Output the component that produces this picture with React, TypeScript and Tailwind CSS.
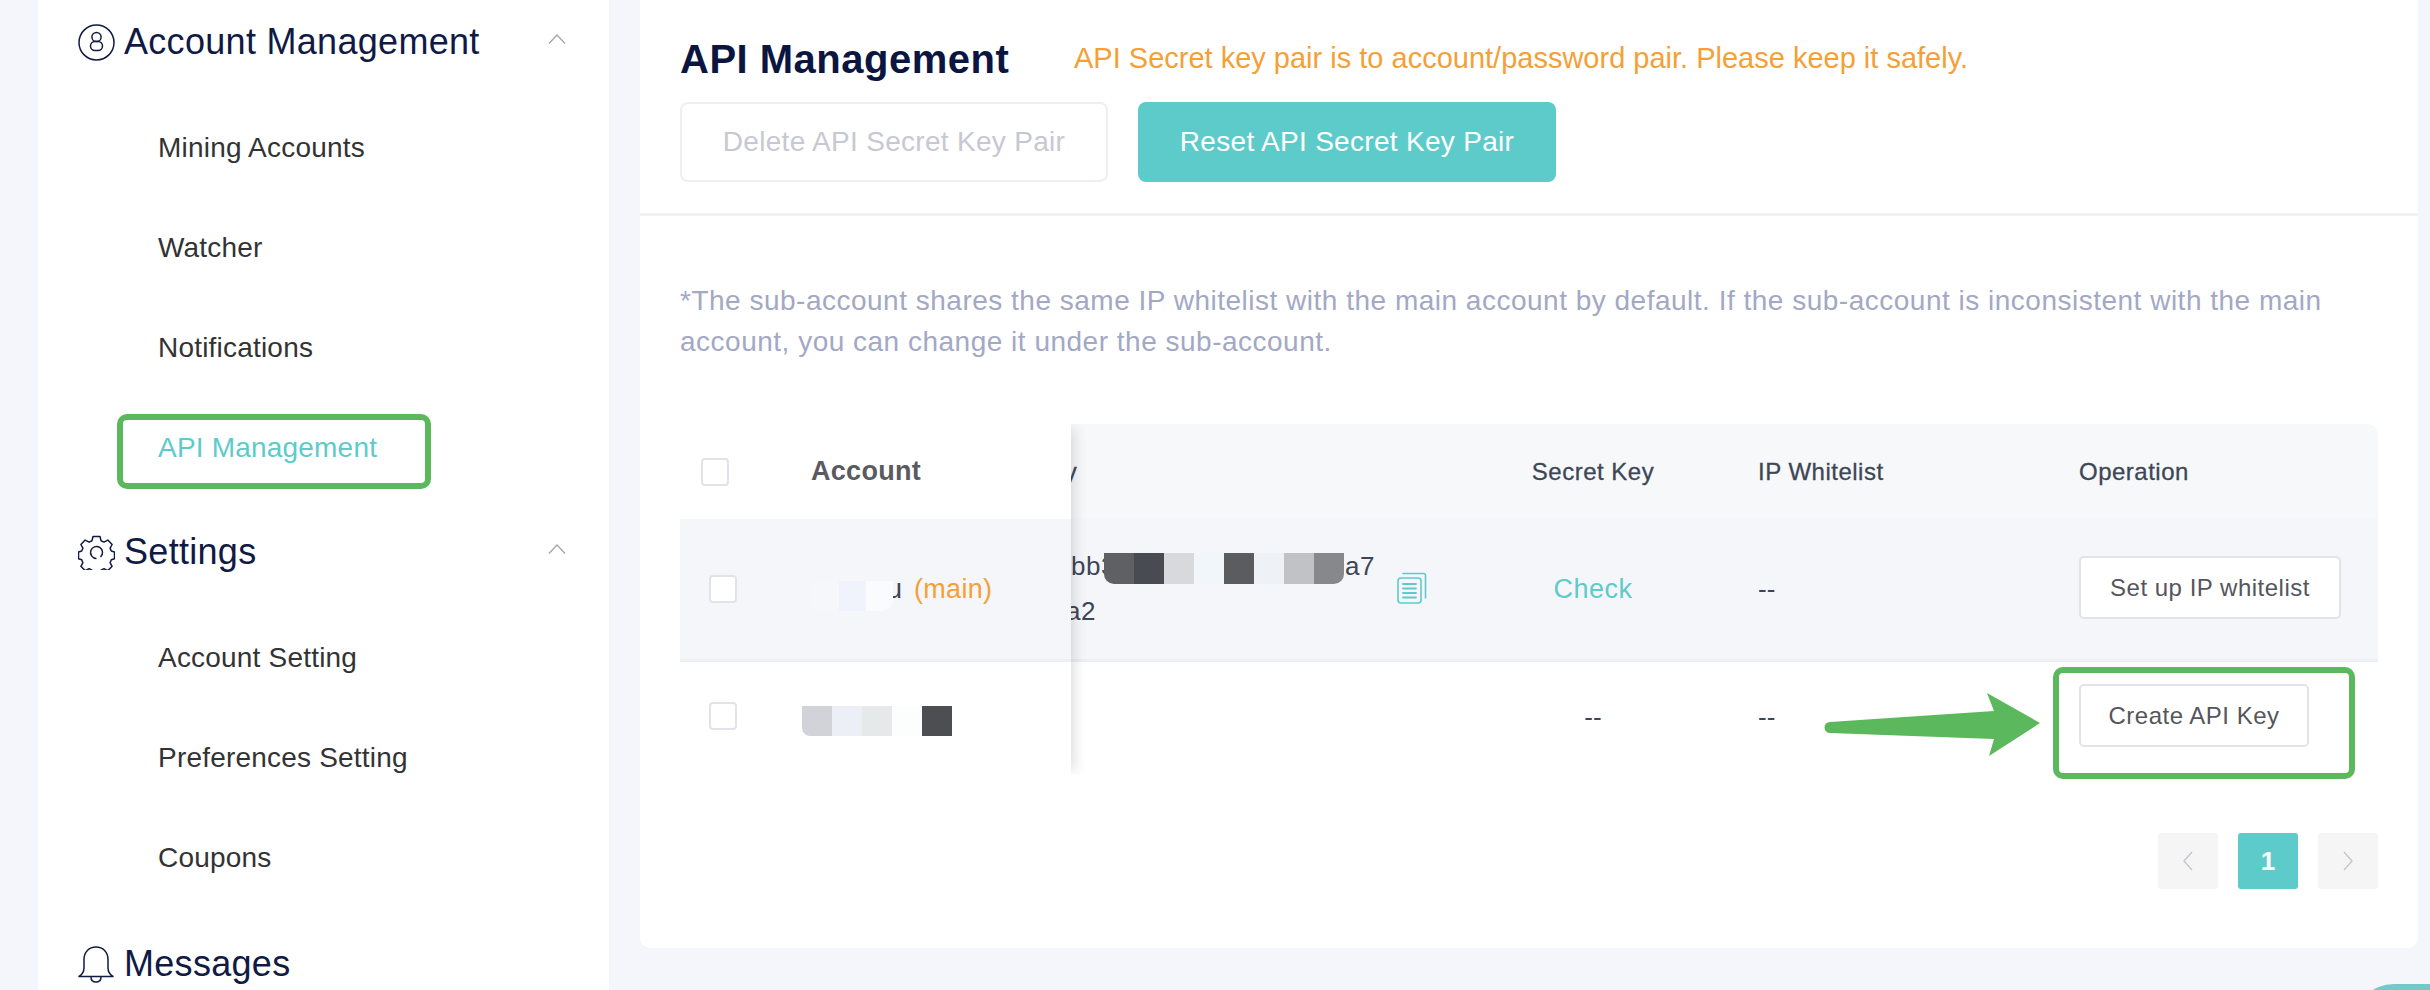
const font = { fontFamily: '"Liberation Sans", Arial, sans-serif' };

function AccountIcon() {
  return (
    <svg width="37" height="37" viewBox="0 0 37 37" fill="none" stroke="#101a45" strokeWidth="1.5">
      <circle cx="18.5" cy="18.5" r="17.5" />
      <circle cx="18.5" cy="13" r="4.6" />
      <rect x="12.5" y="17.5" width="12" height="9" rx="4.5" />
    </svg>
  );
}

function GearIcon() {
  return (
    <svg width="37" height="35" viewBox="0 0 37 35" fill="none" stroke="#101a45" strokeWidth="1.5" strokeLinejoin="round">
      <path d="M15 1.5h7l1 4.2 3 1.4 3.8-2 4.3 4.4-2 3.6 1.2 2.9 3.2 1v6.8l-3.2 1-1.2 2.9 2 3.6-4.3 4.4-3.8-2-3 1.4-1 1.3h-7l-1-1.3-3-1.4-3.8 2-4.3-4.4 2-3.6-1.2-2.9-3.2-1v-6.8l3.2-1 1.2-2.9-2-3.6 4.3-4.4 3.8 2 3-1.4z" />
      <path d="M22.5 22a6 6 0 1 0-4 1.5" />
    </svg>
  );
}

function BellIcon() {
  return (
    <svg width="36" height="37" viewBox="0 0 36 37" fill="none" stroke="#101a45" strokeWidth="1.5" strokeLinejoin="round">
      <path d="M1 30.5h34c-3.500-2-5-5-5-9V13.500C30 6 25 1 18 1S6 6 6 13.500v8c0 4-1.500 7-5 9z" />
      <path d="M13 31c0 3.200 2.200 5 5 5s5-1.800 5-5" />
    </svg>
  );
}

function Chevron() {
  return (
    <svg width="18" height="10" viewBox="0 0 18 10" fill="none" stroke="#a3a5ad" strokeWidth="1.3">
      <path d="M1 9.500 9 1l8 8.500" />
    </svg>
  );
}

function CopyIcon() {
  return (
    <svg width="30" height="32" viewBox="0 0 30 32" fill="none" stroke="#5ecbcb" strokeWidth="1.6" strokeLinecap="round">
      <path d="M6 1.500h20.500a2 2 0 0 1 2 2V26" />
      <rect x="1" y="6" width="23" height="25" rx="3" />
      <path d="M6 12h13M6 16.500h13M6 21h13M6 25.500h13" strokeWidth="1.8" />
    </svg>
  );
}

// mosaic blocks that hide account names and keys in the reference
function Pixels({ colors, cell, className }: { colors: string[]; cell: string; className?: string }) {
  return (
    <div className={`flex overflow-hidden ${className ?? ''}`}>
      {colors.map((c, i) => (
        <div key={i} className={cell} style={{ backgroundColor: c }} />
      ))}
    </div>
  );
}

function NavGroup({ icon, title, items, active }: { icon: React.ReactNode; title: string; items: string[]; active?: string }) {
  return (
    <div>
      <div className="flex items-center h-[40px] pr-[43px]">
        <div className="w-[46px] flex shrink-0">{icon}</div>
        <span className="text-[36px] tracking-[0.3px] text-[#101a45] flex-1">{title}</span>
        {items.length > 0 && <div className="-mt-[6px]"><Chevron /></div>}
      </div>
      <div className="mt-[50px]">
        {items.map((it) => (
          <div key={it} className="relative h-[100px] pl-[80px] pt-[16px]">
            {it === active && <div className="absolute left-[39px] top-[2px] w-[314px] h-[75px] border-[6px] border-[#5cb85c] rounded-[10px]" />}
            <span className={`text-[28px] tracking-[0.2px] leading-[40px] ${it === active ? 'text-[#5ecbcb]' : 'text-[#333333]'}`}>{it}</span>
          </div>
        ))}
      </div>
    </div>
  );
}

export default function App() {
  return (
    <div className="relative flex h-[990px] w-[2430px] overflow-hidden bg-[#f4f6fb]" style={font}>
      {/* sidebar */}
      <div className="ml-[38px] w-[571px] h-full bg-white pl-[40px] pt-[22px] shrink-0">
        <NavGroup
          icon={<AccountIcon />}
          title="Account Management"
          items={['Mining Accounts', 'Watcher', 'Notifications', 'API Management']}
          active="API Management"
        />
        <div className="mt-[20px]">
          <NavGroup icon={<GearIcon />} title="Settings" items={['Account Setting', 'Preferences Setting', 'Coupons']} />
        </div>
        <div className="mt-[22px]">
          <NavGroup icon={<BellIcon />} title="Messages" items={[]} />
        </div>
      </div>

      {/* main card */}
      <div className="ml-[31px] w-[1778px] h-[948px] bg-white rounded-b-[10px] shrink-0">
        <div className="h-[216px] border-b-[3px] border-[#f1f1f6] px-[40px] pt-[32px]">
          <div className="flex items-center h-[54px]">
            <h1 className="text-[40px] font-bold tracking-[0.5px] text-[#0b1640] w-[394px]">API Management</h1>
            <span className="text-[29px] text-[#f5a037]">API Secret key pair is to account/password pair. Please keep it safely.</span>
          </div>
          <div className="flex gap-[30px] mt-[16px]">
            <button className="w-[428px] h-[80px] rounded-[8px] border-[2px] border-[#eeeef3] text-[28px] tracking-[0.3px] text-[#c6c8d2]">Delete API Secret Key Pair</button>
            <button className="w-[418px] h-[80px] rounded-[8px] bg-[#5ecbcb] text-[28px] tracking-[0.3px] text-white">Reset API Secret Key Pair</button>
          </div>
        </div>

        <div className="px-[40px] pt-[64px]">
          <p className="text-[28px] leading-[41px] tracking-[0.5px] text-[#a3a8c4]">
            *The sub-account shares the same IP whitelist with the main account by default. If the sub-account is inconsistent with the main<br />
            account, you can change it under the sub-account.
          </p>

          {/* table */}
          <div className="relative mt-[62px] h-[351px] overflow-hidden">
            <div className="flex">
              {/* fixed column */}
              <div className="relative z-10 w-[391px] shrink-0 bg-white shadow-[8px_0_12px_-4px_rgba(0,0,0,0.12)]">
                <div className="h-[95px] flex items-center pl-[21px]">
                  <div className="w-[28px] h-[28px] rounded-[4px] border-[2px] border-[#e2e3ea] bg-white" />
                  <span className="ml-[82px] text-[27px] font-bold tracking-[0.3px] text-[#5a5b60]">Account</span>
                </div>
                <div className="h-[143px] bg-[#f5f6fa] border-b-[3px] border-[#eeeff4] flex items-center pl-[29px]">
                  <div className="w-[28px] h-[28px] rounded-[4px] border-[2px] border-[#e2e3ea] bg-white" />
                  <div className="relative ml-[75px] w-[90px] flex justify-end text-[28px] text-[#3d4656]">
                    <span>u</span>
                    <div className="absolute left-0 top-[13px]">
                      <Pixels colors={['#f6f7fb', '#f0f3fb', '#fafbfd']} cell="w-[27px] h-[30px]" className="rounded-br-[12px]" />
                    </div>
                  </div>
                  <span className="ml-[12px] text-[27px] tracking-[0.3px] text-[#f5a037]">(main)</span>
                </div>
                <div className="h-[113px] flex pl-[29px] pt-[40px]">
                  <div className="w-[28px] h-[28px] rounded-[4px] border-[2px] border-[#e2e3ea] bg-white" />
                  <div className="ml-[65px] mt-[4px]">
                    <Pixels colors={['#d2d3d8', '#ecf0f6', '#e6e9ea', '#fcfdfd', '#4d4e52']} cell="w-[30px] h-[30px]" className="rounded-bl-[8px]" />
                  </div>
                </div>
              </div>

              {/* scrolled columns, their left part slides under the fixed column */}
              <div className="flex-1 min-w-0">
                <div className="grid grid-cols-[429px_186px_393px_299px] h-[95px] items-center bg-[#f7f8fa] rounded-tr-[10px] text-[24px] tracking-[0.5px] text-[#3d4656] [-webkit-text-stroke:0.3px_#3d4656]">
                  <div className="-ml-[84px] whitespace-nowrap">API Key</div>
                  <div className="text-center">Secret Key</div>
                  <div className="pl-[72px]">IP Whitelist</div>
                  <div>Operation</div>
                </div>
                <div className="grid grid-cols-[429px_186px_393px_299px] h-[143px] items-center bg-[#f5f6fa] border-b-[3px] border-[#eeeff4]">
                  <div className="relative flex items-center text-[26px] leading-[45px] tracking-[0.5px] text-[#3d4656]">
                    <div className="w-[304px] shrink-0">
                      <div className="flex justify-between"><span>bb3</span><span>a7</span></div>
                      <div className="-ml-[5px]">a2</div>
                    </div>
                    <div className="absolute left-[33px] top-[9px]">
                      <Pixels colors={['#5e6064', '#484c52', '#d7d9dd', '#f1f6fb', '#5a5c60', '#eef1f5', '#c0c2c5', '#86888b']} cell="w-[30px] h-[31px]" className="rounded-b-[10px]" />
                    </div>
                    <div className="ml-[22px] mb-[3px]"><CopyIcon /></div>
                  </div>
                  <div className="text-center text-[27px] tracking-[0.5px] text-[#5ecbcb]">Check</div>
                  <div className="pl-[72px] text-[26px] text-[#3d4656]">--</div>
                  <div className="pb-[3px]">
                    <button className="w-[262px] h-[63px] bg-white rounded-[5px] border-[2px] border-[#e2e3ea] text-[24px] tracking-[0.5px] text-[#55565c]">Set up IP whitelist</button>
                  </div>
                </div>
                <div className="grid grid-cols-[429px_186px_393px_299px] h-[113px] items-start pt-[22px] text-[26px] text-[#3d4656]">
                  <div />
                  <div className="text-center pt-[14px]">--</div>
                  <div className="pl-[72px] pt-[14px]">--</div>
                  <div>
                    <button className="w-[230px] h-[63px] bg-white rounded-[5px] border-[2px] border-[#e2e3ea] text-[24px] tracking-[0.5px] text-[#55565c]">Create API Key</button>
                  </div>
                </div>
              </div>
            </div>
          </div>

          {/* pagination */}
          <div className="flex justify-end gap-[20px] mt-[58px]">
            <div className="w-[60px] h-[56px] rounded-[3px] bg-[#f5f5f5] flex items-center justify-center">
              <svg width="12" height="20" viewBox="0 0 12 20" fill="none" stroke="#c4c6cc" strokeWidth="1.4"><path d="M10 1 2 10l8 9" /></svg>
            </div>
            <div className="w-[60px] h-[56px] rounded-[3px] bg-[#5ecbcb] flex items-center justify-center text-[26px] font-bold text-white">1</div>
            <div className="w-[60px] h-[56px] rounded-[3px] bg-[#f5f5f5] flex items-center justify-center">
              <svg width="12" height="20" viewBox="0 0 12 20" fill="none" stroke="#c4c6cc" strokeWidth="1.4"><path d="m2 1 8 9-8 9" /></svg>
            </div>
          </div>
        </div>
      </div>

      {/* annotation: arrow and box around Create API Key */}
      <div className="absolute left-[2053px] top-[667px] w-[302px] h-[112px] border-[6px] border-[#5cb85c] rounded-[10px]" />
      <svg className="absolute left-[1820px] top-[690px]" width="224" height="70" viewBox="0 0 224 70" fill="#5cb85c">
        <path d="M10 32 174 21 167 3 220 33 169 66 174 49 10 43a5.500 5.500 0 0 1 0-11z" />
      </svg>

      {/* chat bubble peeking in at the corner */}
      <div className="absolute left-[2354px] top-[984px] w-[120px] h-[120px] rounded-[40px] bg-[#73c8c8]" />
    </div>
  );
}
